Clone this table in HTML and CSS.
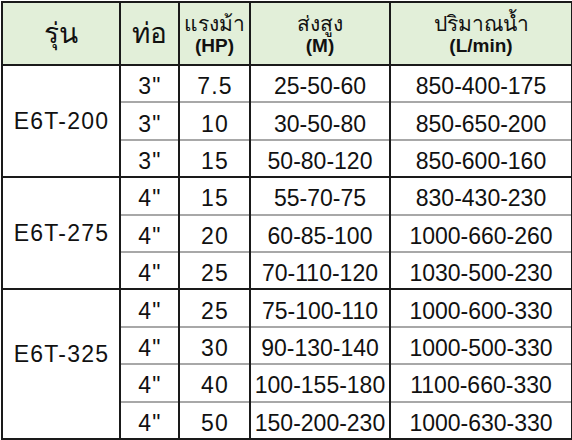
FILE: index.html
```html
<!DOCTYPE html>
<html lang="th">
<head>
<meta charset="utf-8">
<link rel="stylesheet" href="styles.css">
</head>
<body>
<table class="spec">
  <colgroup>
    <col class="c-model"><col class="c-pipe"><col class="c-hp"><col class="c-head"><col class="c-flow">
  </colgroup>
  <thead>
    <tr class="hdr">
      <th><span class="th-big">รุ่น</span></th>
      <th><span class="th-big">ท่อ</span></th>
      <th><span class="th-th">แรงม้า</span><span class="th-en">(HP)</span></th>
      <th><span class="th-th">ส่งสูง</span><span class="th-en">(M)</span></th>
      <th><span class="th-th">ปริมาณน้ำ</span><span class="th-en">(L/min)</span></th>
    </tr>
  </thead>
  <tbody class="grp">
    <tr><td class="model" rowspan="3">E6T-200</td><td class="n">3"</td><td class="n">7.5</td><td>25-50-60</td><td>850-400-175</td></tr>
    <tr class="sub"><td class="n">3"</td><td class="n">10</td><td>30-50-80</td><td>850-650-200</td></tr>
    <tr class="sub"><td class="n">3"</td><td class="n">15</td><td>50-80-120</td><td>850-600-160</td></tr>
  </tbody>
  <tbody class="grp">
    <tr><td class="model" rowspan="3">E6T-275</td><td class="n">4"</td><td class="n">15</td><td>55-70-75</td><td>830-430-230</td></tr>
    <tr class="sub"><td class="n">4"</td><td class="n">20</td><td>60-85-100</td><td>1000-660-260</td></tr>
    <tr class="sub"><td class="n">4"</td><td class="n">25</td><td>70-110-120</td><td>1030-500-230</td></tr>
  </tbody>
  <tbody class="grp">
    <tr><td class="model model-high" rowspan="4">E6T-325</td><td class="n">4"</td><td class="n">25</td><td>75-100-110</td><td>1000-600-330</td></tr>
    <tr class="sub"><td class="n">4"</td><td class="n">30</td><td>90-130-140</td><td>1000-500-330</td></tr>
    <tr class="sub"><td class="n">4"</td><td class="n">40</td><td>100-155-180</td><td>1100-660-330</td></tr>
    <tr class="sub"><td class="n">4"</td><td class="n">50</td><td>150-200-230</td><td>1000-630-330</td></tr>
  </tbody>
</table>
</body>
</html>
```

FILE: styles.css
```css
html, body {
  margin: 0;
  padding: 0;
  background: #ffffff;
}
body {
  font-family: "Liberation Sans", Arial, sans-serif;
  color: #111;
}
.spec {
  border-collapse: collapse;
  table-layout: fixed;
  width: 570px;
  margin: 1px 0 0 1px;
  border: 2px solid #1a1a1a;
}
.c-model { width: 118px; }
.c-pipe { width: 59px; }
.c-hp { width: 71px; }
.c-head { width: 140px; }
.c-flow { width: 182px; }

.spec th, .spec td {
  border-left: 2px solid #1a1a1a;
  border-right: 2px solid #1a1a1a;
  text-align: center;
  vertical-align: middle;
  padding: 0;
  overflow: hidden;
}
.hdr th {
  background: #e2efd9;
  height: 61px;
  font-weight: normal;
  border-bottom: 2px solid #1a1a1a;
  line-height: 1;
}
.th-big {
  font-size: 28px;
}
.th-th {
  display: block;
  font-size: 21px;
  line-height: 25px;
}
.th-en {
  display: block;
  font-size: 19px;
  font-weight: bold;
  line-height: 20px;
}
.spec td {
  height: 29.4px;
  padding-top: 6px;
  font-size: 23px;
  line-height: 1;
}
.spec td.n {
  letter-spacing: 1.2px;
  padding-left: 1px;
}
.spec td.model {
  padding-top: 0;
  letter-spacing: 1.2px;
  padding-left: 1px;
  border-top: none;
}
.spec td.model-high {
  padding-bottom: 20px;
}
.grp {
  border-top: 2px solid #1a1a1a;
}
.sub td {
  border-top: 2px solid #a8a8a8;
}
```
